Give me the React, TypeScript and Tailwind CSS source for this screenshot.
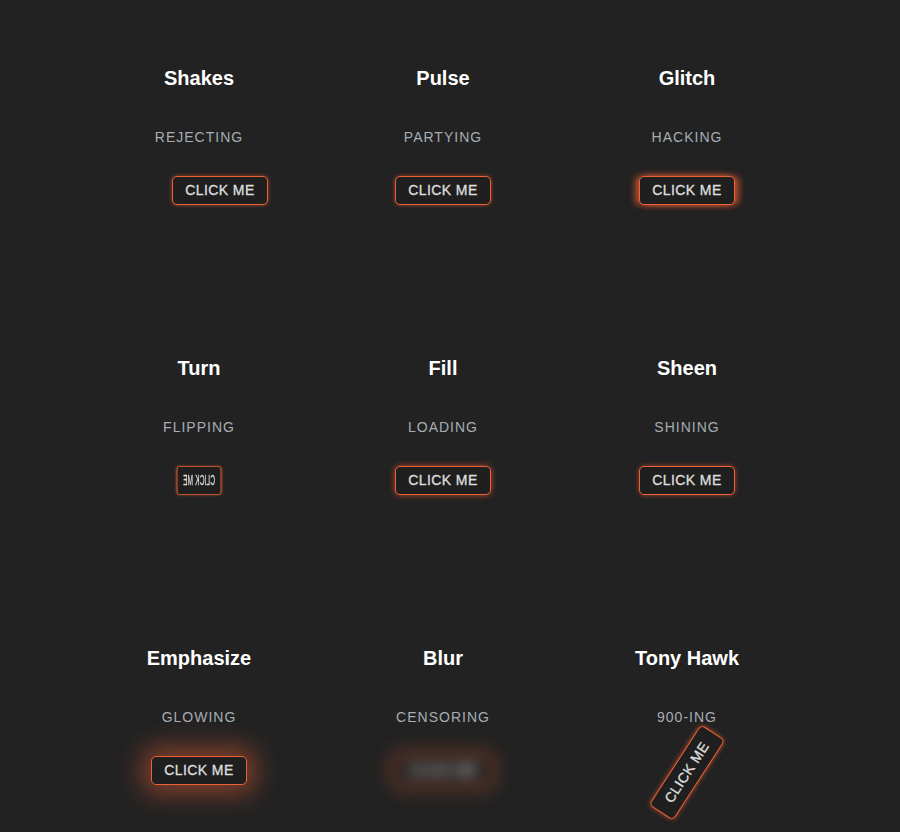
const cells = [
  { title: "Shakes", sub: "REJECTING", kind: "shake" },
  { title: "Pulse", sub: "PARTYING", kind: "pulse" },
  { title: "Glitch", sub: "HACKING", kind: "glitch" },
  { title: "Turn", sub: "FLIPPING", kind: "turn" },
  { title: "Fill", sub: "LOADING", kind: "fill" },
  { title: "Sheen", sub: "SHINING", kind: "sheen" },
  { title: "Emphasize", sub: "GLOWING", kind: "emphasize" },
  { title: "Blur", sub: "CENSORING", kind: "blur" },
  { title: "Tony Hawk", sub: "900-ING", kind: "hawk" },
];

const effect: Record<string, string> = {
  shake: "translate-x-[21px] shadow-[0_0_4px_rgba(236,95,53,0.6)]",
  pulse: "shadow-[0_0_4px_rgba(236,95,53,0.6)]",
  glitch: "shadow-[-4px_0_6px_rgba(236,95,53,0.7),4px_0_6px_rgba(236,95,53,0.7)]",
  turn: "[transform:scaleX(-0.46)] shadow-[0_0_4px_rgba(236,95,53,0.6)]",
  fill: "shadow-[0_0_6px_rgba(236,95,53,0.7)]",
  sheen: "shadow-[0_0_5px_rgba(236,95,53,0.6)]",
  emphasize: "shadow-[0_0_26px_8px_rgba(236,95,53,0.5)]",
  blur: "blur-[7px] shadow-[0_0_14px_4px_rgba(236,95,53,0.35)]",
  hawk: "-rotate-[57deg] translate-y-[2px] shadow-[0_0_5px_rgba(236,95,53,0.7)]",
};

export default function App() {
  return (
    <div className="min-h-[832px] w-full overflow-hidden bg-[#222222] font-['Liberation_Sans',Arial,sans-serif]">
      <div className="grid grid-cols-3 pl-[77px] pr-[91px]">
        {cells.map((c) => (
          <div key={c.title} className="flex h-[290px] flex-col items-center pt-[66px]">
            <h2 className="text-[20px] leading-[24px] font-bold text-white">{c.title}</h2>
            <p className="mt-[37px] text-[14px] leading-[20px] tracking-[1px] text-[#a6adb4]">{c.sub}</p>
            <button
              className={`mt-[29px] flex h-[29px] w-[96px] items-center justify-center rounded-[5px] border-[1.5px] border-[#ee6036] bg-[#1f1f1f] text-[14px] tracking-[0.4px] text-[#dddddd] [-webkit-text-stroke:0.35px_#dddddd] ${effect[c.kind]}`}
            >
              CLICK ME
            </button>
          </div>
        ))}
      </div>
    </div>
  );
}
